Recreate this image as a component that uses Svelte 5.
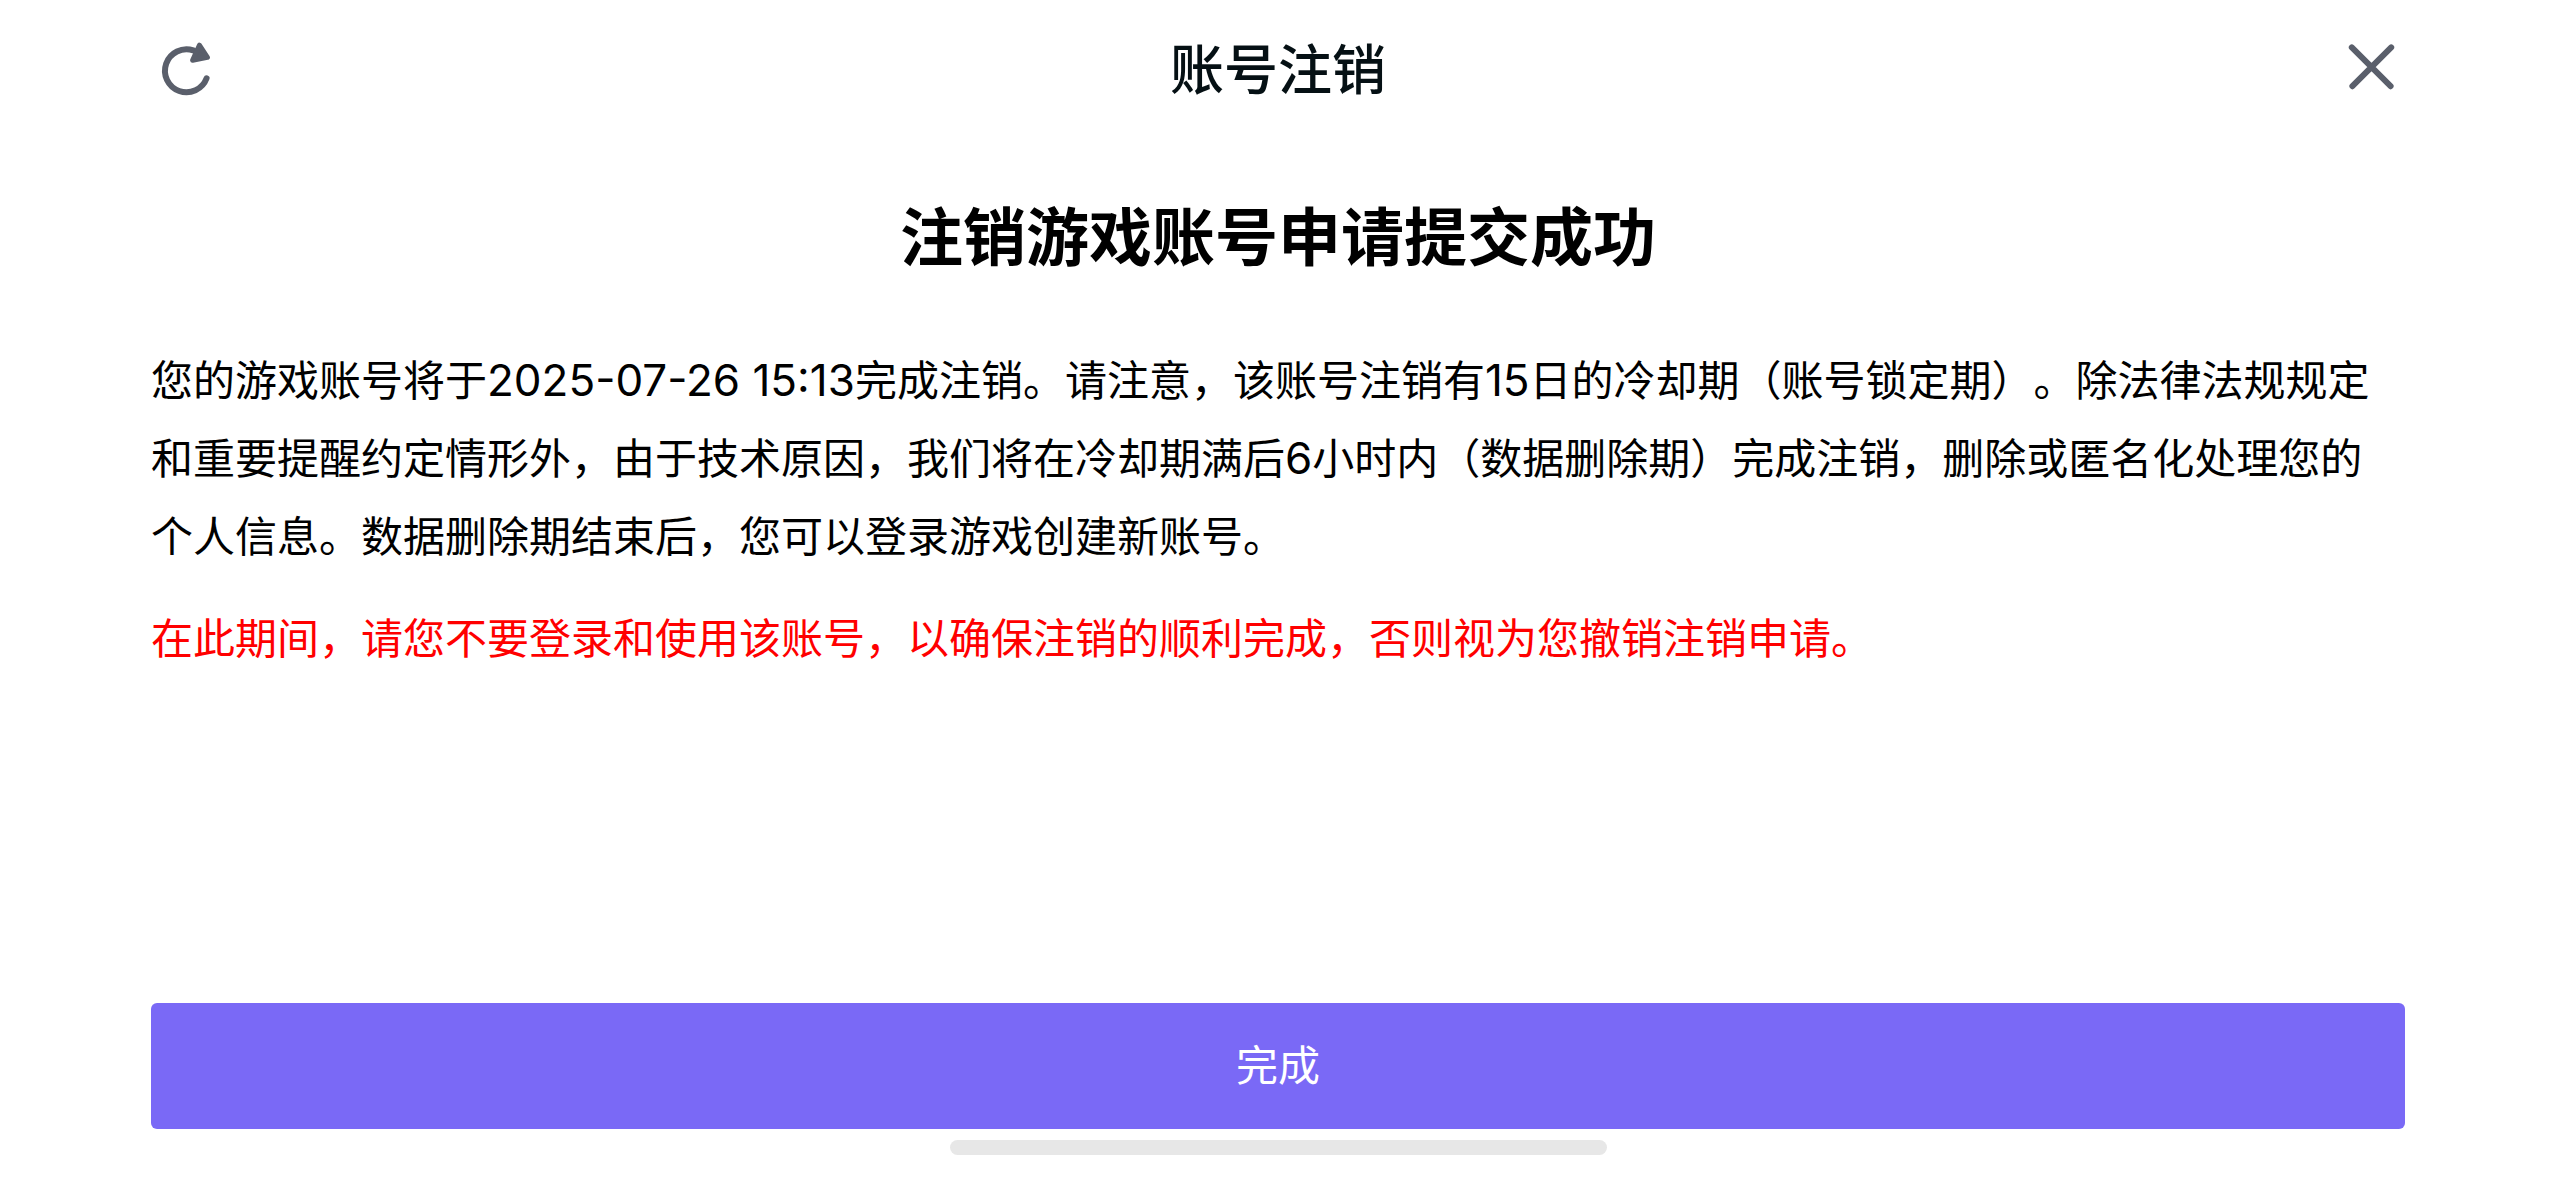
<script lang="ts">
  export let deadline = '2025-07-26 15:13';
  export let coolingDays = 15;
  export let deleteHours = 6;

  let open = true;

  function reload() {
    window.location.reload();
  }

  function close() {
    open = false;
    window.postMessage({ type: 'accountCancelClosed' }, '*');
  }
</script>

{#if open}
  <div class="page">
    <header class="navbar">
      <button class="icon-btn" aria-label="刷新" on:click={reload}>
        <svg viewBox="0 0 70 70" aria-hidden="true">
          <path class="line" d="M42.3 16.4A21.5 21.5 0 1 0 55.6 44.3" />
          <path class="arrow" d="M48.4 11.2L56.4 23.3L41.6 26.2Z" />
        </svg>
      </button>
      <h1 class="title">账号注销</h1>
      <button class="icon-btn" aria-label="关闭" on:click={close}>
        <svg viewBox="0 0 70 70" aria-hidden="true">
          <path class="line" d="M16.8 13.4L55.6 52.2M56.2 13.4L17.4 52.2" />
        </svg>
      </button>
    </header>

    <main class="content">
      <h2 class="heading">注销游戏账号申请提交成功</h2>
      <p>
        您的游戏账号将于<span class="num">{deadline}</span>完成注销。请注意，该账号注销有<span class="num">{coolingDays}</span>日的冷却期（账号锁定期）。除法律法规规定和重要提醒约定情形外，由于技术原因，我们将在冷却期满后<span class="num">{deleteHours}</span>小时内（数据删除期）完成注销，删除或匿名化处理您的个人信息。数据删除期结束后，您可以登录游戏创建新账号。
      </p>
      <p class="warning">
        在此期间，请您不要登录和使用该账号，以确保注销的顺利完成，否则视为您撤销注销申请。
      </p>
    </main>

    <footer class="footer">
      <button class="done-btn" on:click={close}>完成</button>
      <div class="home-indicator"></div>
    </footer>
  </div>
{/if}

<style>
  :global(body) {
    margin: 0;
    background: #fff;
  }

  .page {
    display: flex;
    flex-direction: column;
    box-sizing: border-box;
    min-height: 100vh;
    padding: 0 151px;
    background: #fff;
    color: #000;
    font-family: Inter, 'Noto Sans CJK SC', sans-serif;
    font-size: 42px;
    line-height: 78px;
    text-spacing-trim: space-all;
  }

  .navbar {
    display: flex;
    align-items: center;
    justify-content: space-between;
    height: 138px;
  }

  .icon-btn {
    width: 70px;
    height: 70px;
    padding: 0;
    border: none;
    background: transparent;
    cursor: pointer;
  }

  .icon-btn svg {
    display: block;
    width: 100%;
    height: 100%;
  }

  .line {
    fill: none;
    stroke: #5a5f6b;
    stroke-width: 6;
    stroke-linecap: round;
  }

  .arrow {
    fill: #5a5f6b;
    stroke: #5a5f6b;
    stroke-width: 5;
    stroke-linejoin: round;
  }

  .title {
    margin: 0;
    padding-top: 4px;
    color: #051014;
    font-size: 54px;
    font-weight: 500;
  }

  .content {
    flex: 1;
  }

  .heading {
    margin: 60px 0 66px;
    font-size: 63px;
    font-weight: 700;
    text-align: center;
  }

  p {
    margin: 0;
    padding-right: 8px;
  }

  .num {
    font-size: 44px;
    line-height: 1;
  }

  .warning {
    margin-top: 24px;
    color: #f00;
  }

  .footer {
    display: flex;
    flex-direction: column;
    align-items: center;
    gap: 11px;
    padding-bottom: 24px;
  }

  .done-btn {
    width: 100%;
    height: 126px;
    padding: 0 0 8px;
    border: none;
    border-radius: 6px;
    background: #7a69f6;
    color: #fff;
    font-family: inherit;
    font-size: 42px;
    cursor: pointer;
  }

  .home-indicator {
    width: 657px;
    max-width: 100%;
    height: 15px;
    border-radius: 8px;
    background: #e7e7e7;
  }
</style>
